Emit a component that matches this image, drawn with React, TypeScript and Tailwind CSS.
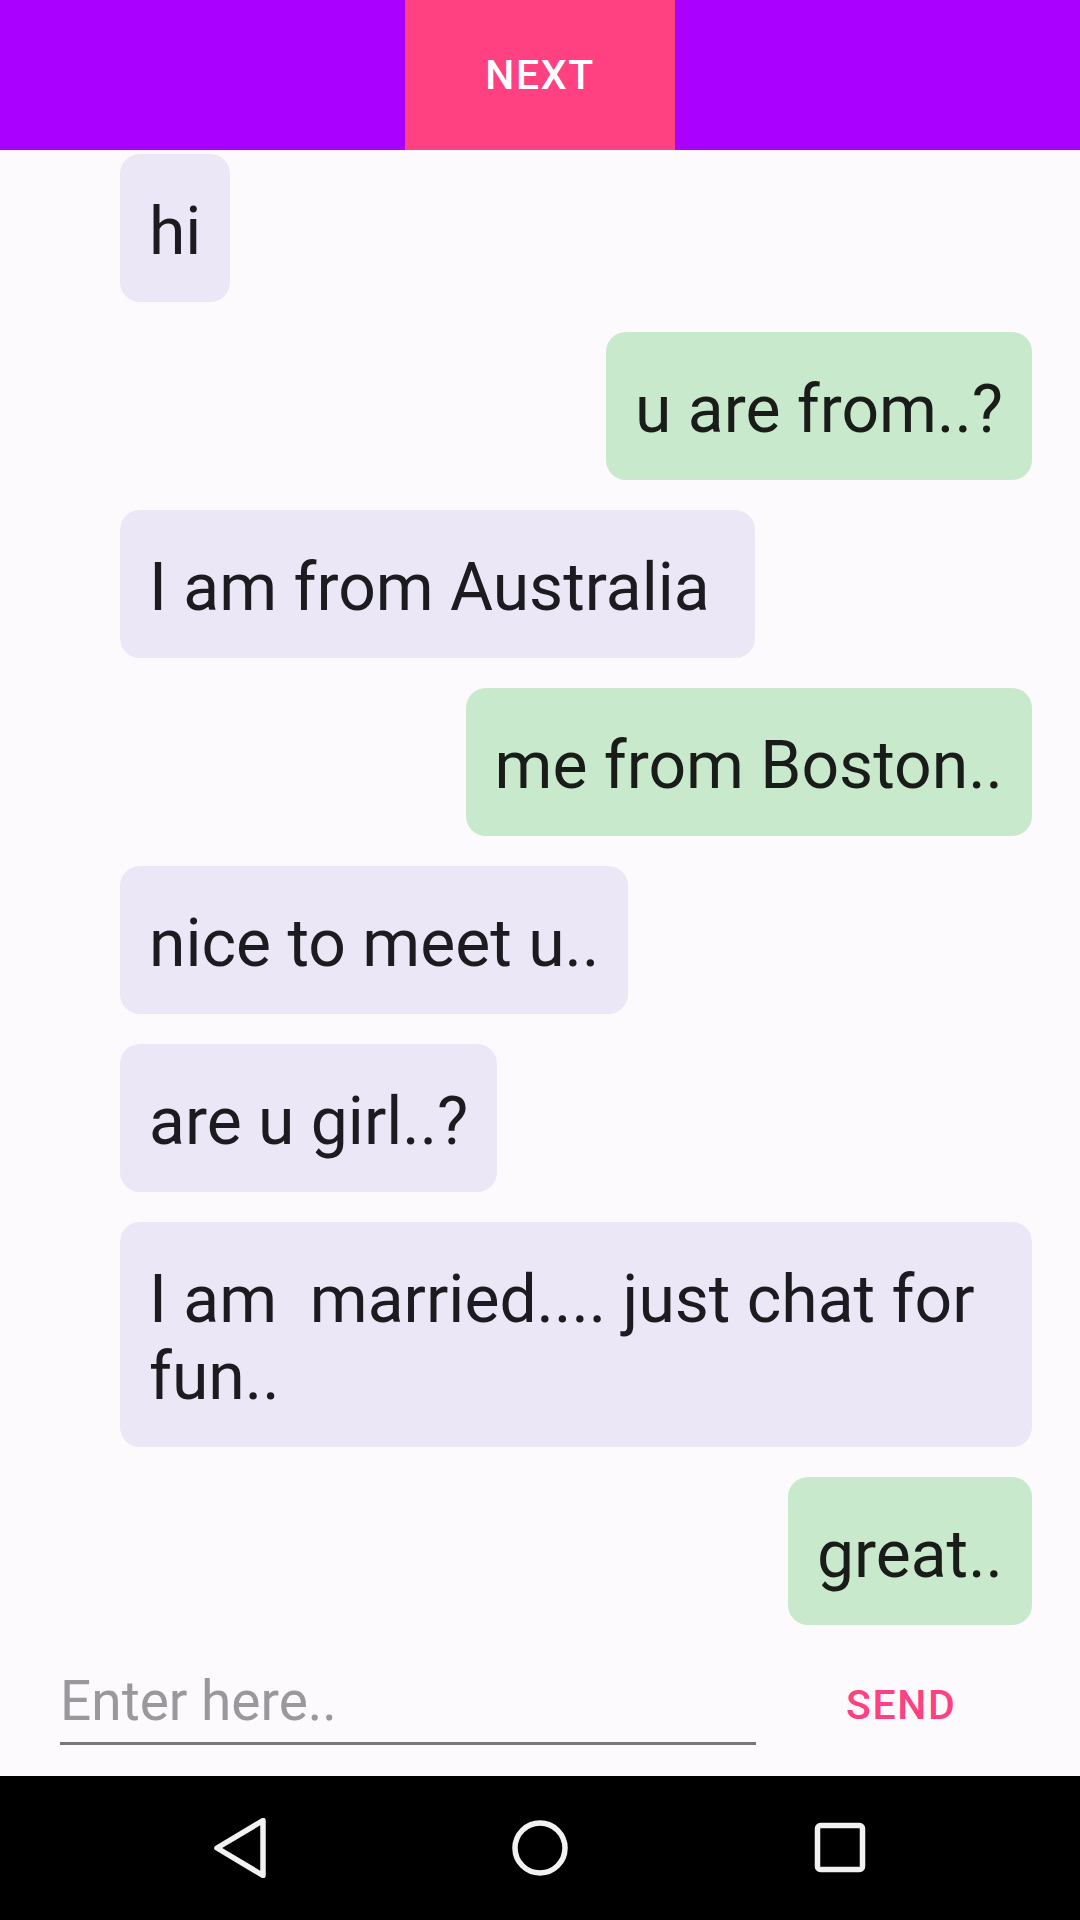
import React from "react";

type Msg = { text: string; mine: boolean };

const messages: Msg[] = [
  { text: "hi", mine: false },
  { text: "u are from..?", mine: true },
  { text: "I am from Australia\u00a0", mine: false },
  { text: "me from Boston..", mine: true },
  { text: "nice to meet u..", mine: false },
  { text: "are u girl..?", mine: false },
  { text: "I am  married.... just chat for fun..", mine: false },
  { text: "great..", mine: true },
];

function Bubble({ m }: { m: Msg }) {
  return (
    <div className={m.mine ? "flex justify-end" : "flex justify-start"}>
      <div
        className={
          m.mine
            ? "rounded-[20px] bg-[#c9e9cc] px-[29px] pt-[39px] pb-[32px] text-[66px] leading-[77px] text-[#191c19] whitespace-pre-wrap"
            : "rounded-[20px] bg-[#ebe7f6] px-[29px] pt-[39px] pb-[32px] text-[66px] leading-[77px] text-[#1c1b1f] whitespace-pre-wrap"
        }
      >
        {m.text}
      </div>
    </div>
  );
}

export default function App() {
  return (
    <div
      className="flex h-[1920px] w-[1080px] flex-col overflow-hidden bg-[#fcfafd]"
      style={{ fontFamily: "Roboto, 'Liberation Sans', sans-serif" }}
    >
      {/* Top bar */}
      <div className="flex h-[150px] shrink-0 justify-center bg-[#aa00ff]">
        <button className="flex h-full w-[270px] items-center justify-center bg-[#ff4081] text-[41px] font-medium leading-[48px] tracking-[0.04em] text-white">
          NEXT
        </button>
      </div>

      {/* Chat list */}
      <div className="flex flex-1 flex-col gap-[30px] overflow-hidden pl-[120px] pr-[48px] pt-[4px]">
        {messages.map((m, i) => (
          <Bubble key={i} m={m} />
        ))}
      </div>

      {/* Input row */}
      <div className="flex h-[150px] shrink-0 items-start">
        <div className="ml-[60px] mt-[43px] w-[696px] border-b-[3px] border-[#7b777f] pb-[9px] text-[55px] leading-[64px] text-[#9a989c]">
          Enter here..
        </div>
        <button className="ml-[90px] mt-[55px] text-[41px] font-medium leading-[48px] tracking-[0.04em] text-[#ff4081]">
          SEND
        </button>
      </div>

      {/* Nav bar */}
      <div className="flex h-[144px] shrink-0 items-center justify-center gap-[240px] bg-black">
        <svg width="60" height="60" viewBox="0 0 60 60">
          <path
            d="M7 30 L53 2.5 L53 57.5 Z"
            fill="none"
            stroke="#f2f2f2"
            strokeWidth="5.5"
            strokeLinejoin="round"
          />
        </svg>
        <svg width="60" height="60" viewBox="0 0 60 60">
          <circle cx="30" cy="30" r="25" fill="none" stroke="#f2f2f2" strokeWidth="5.5" />
        </svg>
        <svg width="60" height="60" viewBox="0 0 60 60">
          <rect x="7.5" y="7.5" width="45" height="44" rx="3" fill="none" stroke="#f2f2f2" strokeWidth="5.5" />
        </svg>
      </div>
    </div>
  );
}
